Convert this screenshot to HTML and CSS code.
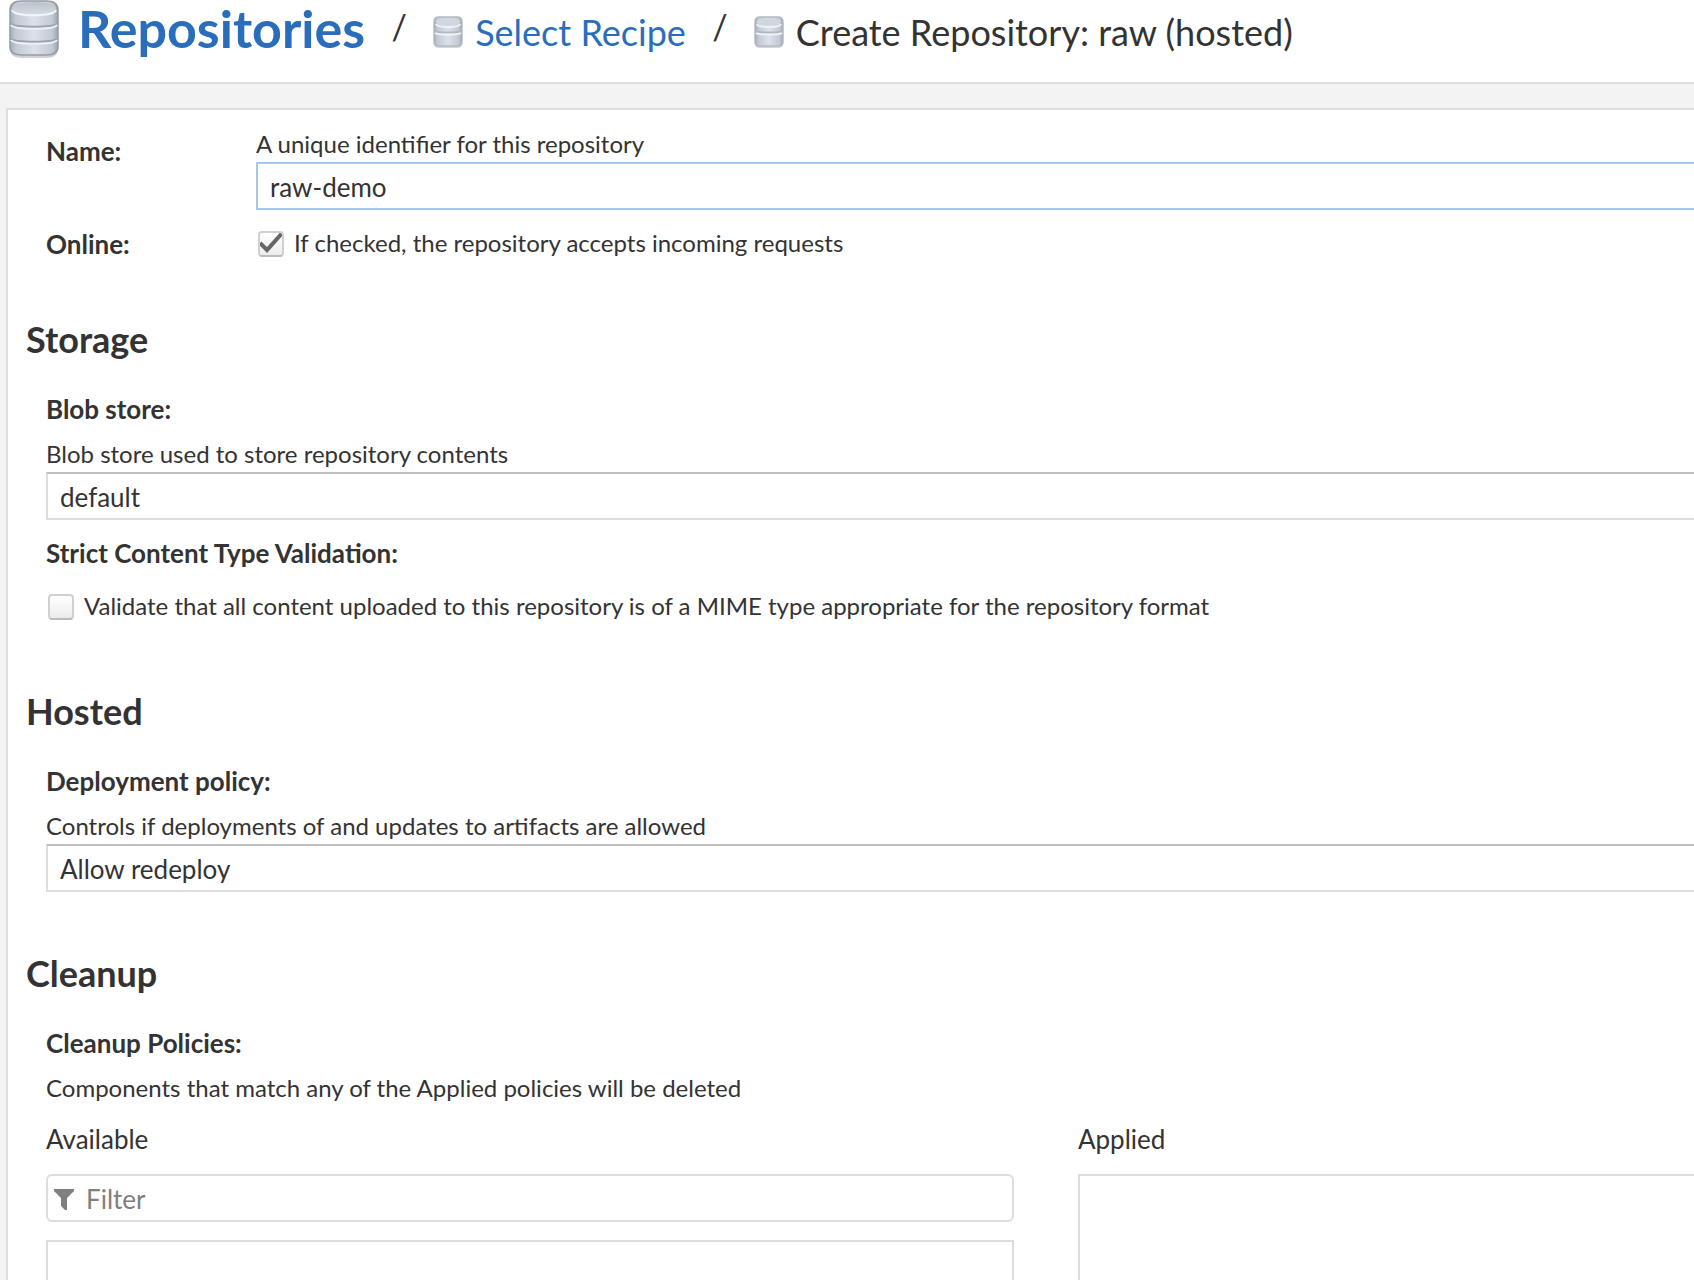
FILE: index.html
```html
<!DOCTYPE html>
<html lang="en">
<head>
<meta charset="utf-8">
<title>Create Repository: raw (hosted)</title>
<link rel="stylesheet" href="styles.css">
</head>
<body>
<svg class="defs" width="0" height="0" aria-hidden="true">
  <defs>
    <linearGradient id="metal" x1="0" x2="1" y1="0" y2="0">
      <stop offset="0" stop-color="#a3abb3"/>
      <stop offset=".12" stop-color="#c3cad3"/>
      <stop offset=".5" stop-color="#dce1ec"/>
      <stop offset=".88" stop-color="#c3cad3"/>
      <stop offset="1" stop-color="#9aa2aa"/>
    </linearGradient>
    <linearGradient id="lid" x1="0" x2="0" y1="0" y2="1">
      <stop offset="0" stop-color="#b9c2c9"/>
      <stop offset="1" stop-color="#d3dae2"/>
    </linearGradient>
    <symbol id="db-large" viewBox="0 0 52 60">
      <path d="M2 9v38q0 9 12 9h24q12 0 12-9V9z" fill="#000" opacity=".18" transform="translate(0 2)"/>
      <path d="M2 10v37q0 8 12 8h24q12 0 12-8V10q0-9-12-9H14Q2 1 2 10z" fill="url(#metal)" stroke="#949ea6" stroke-width="1.5"/>
      <ellipse cx="26" cy="8" rx="22" ry="6" fill="url(#lid)"/>
      <path d="M4 10c2 7 42 7 44 0" fill="none" stroke="#f2f5f8" stroke-width="2"/>
      <path d="M2 23c3 5 45 5 48 0M2 38c3 5 45 5 48 0" fill="none" stroke="#98a2aa" stroke-width="2"/>
      <path d="M3 25c3 5 43 5 46 0M3 40c3 5 43 5 46 0" fill="none" stroke="#edf0f5" stroke-width="2"/>
    </symbol>
    <symbol id="db-small" viewBox="0 0 30 32">
      <path d="M1 5v22q0 4 5 4h18q5 0 5-4V5z" fill="#000" opacity=".16" transform="translate(0 1)"/>
      <path d="M1 6v20q0 4 5 4h18q5 0 5-4V6q0-5-5-5H6Q1 1 1 6z" fill="url(#metal)" stroke="#b2babf" stroke-width="1.5"/>
      <ellipse cx="15" cy="6" rx="12" ry="4" fill="#cfd8df"/>
      <path d="M3 8c1 4 23 4 24 0" fill="none" stroke="#eef2f5" stroke-width="2"/>
      <path d="M2 15c2 2 24 2 26 0" fill="none" stroke="#b0b9c1" stroke-width="2"/>
      <path d="M2 17c2 2 24 2 26 0" fill="none" stroke="#eef1f6" stroke-width="2"/>
    </symbol>
  </defs>
</svg>
<div class="app">
  <header class="header">
    <nav class="breadcrumb" aria-label="Breadcrumb">
      <svg class="icon-large" aria-hidden="true"><use href="#db-large"/></svg>
      <a class="crumb-root" href="#repositories">Repositories</a>
      <span class="slash">/</span>
      <svg class="icon-small" aria-hidden="true"><use href="#db-small"/></svg>
      <a class="crumb" href="#recipe">Select Recipe</a>
      <span class="slash">/</span>
      <svg class="icon-small" aria-hidden="true"><use href="#db-small"/></svg>
      <span class="crumb">Create Repository: raw (hosted)</span>
    </nav>
  </header>
  <main class="main">
    <form class="panel">
      <div class="row">
        <label class="label label-inline" for="name">Name:</label>
        <div>
          <p class="help" id="name-help">A unique identifier for this repository</p>
          <input class="field field-active" id="name" type="text" value="raw-demo" aria-describedby="name-help">
        </div>
      </div>
      <div class="row row-online">
        <span class="label">Online:</span>
        <div class="check">
          <input class="box" id="online" type="checkbox" checked>
          <label for="online">If checked, the repository accepts incoming requests</label>
        </div>
      </div>

      <section class="section">
        <h2 class="title">Storage</h2>
        <div class="group">
          <label class="label" for="blob">Blob store:</label>
          <p class="help">Blob store used to store repository contents</p>
          <select class="field" id="blob"><option>default</option></select>
        </div>
        <div class="group group-check">
          <span class="label">Strict Content Type Validation:</span>
          <div class="check">
            <input class="box" id="strict" type="checkbox">
            <label for="strict">Validate that all content uploaded to this repository is of a MIME type appropriate for the repository format</label>
          </div>
        </div>
      </section>

      <section class="section section-hosted">
        <h2 class="title">Hosted</h2>
        <div class="group">
          <label class="label" for="policy">Deployment policy:</label>
          <p class="help">Controls if deployments of and updates to artifacts are allowed</p>
          <select class="field" id="policy"><option>Allow redeploy</option></select>
        </div>
      </section>

      <section class="section section-fill">
        <h2 class="title">Cleanup</h2>
        <div class="group group-fill">
          <span class="label">Cleanup Policies:</span>
          <p class="help">Components that match any of the Applied policies will be deleted</p>
          <div class="lists">
            <div class="column">
              <label class="list-name" for="filter">Available</label>
              <div class="filter">
                <svg class="funnel" viewBox="0 0 20 21" aria-hidden="true"><path d="M0 0h20v2l-7 7v12h-2l-4-4V9L0 2z" fill="#808080"/></svg>
                <input class="filter-input" id="filter" type="text" placeholder="Filter">
              </div>
              <div class="list"></div>
            </div>
            <div class="column">
              <span class="list-name">Applied</span>
              <div class="list list-applied"></div>
            </div>
          </div>
        </div>
      </section>
    </form>
  </main>
</div>
</body>
</html>
```
FILE: styles.css
```css
* { box-sizing: border-box; }

body {
  margin: 0;
  background: #f3f3f3;
  color: #333;
  font: 24px/28px Lato, "Open Sans", sans-serif;
}

p, h2 { margin: 0; }

.defs { position: absolute; }

.app {
  display: flex;
  flex-direction: column;
  min-height: 100vh;
}

.header {
  background: #fff;
  border-bottom: 2px solid #ddd;
  padding: 0 8px 22px;
}

.breadcrumb {
  display: flex;
  align-items: center;
  height: 60px;
  white-space: nowrap;
}

.breadcrumb a { color: #2a6ebb; text-decoration: none; }

.icon-large { width: 52px; height: 60px; flex: none; }
.icon-small { width: 30px; height: 32px; flex: none; margin: 4px 12px 0 0; }

.crumb-root {
  margin-left: 18px;
  padding-bottom: 4px;
  font-size: 52px;
  font-weight: 700;
  line-height: 56px;
}

.crumb { font-size: 36px; line-height: 40px; padding-top: 4px; }

.slash {
  width: 68px;
  padding-bottom: 6px;
  font-size: 34px;
  text-align: center;
}

.main {
  display: flex;
  flex: 1;
  padding: 24px 0 0 6px;
}

.panel {
  display: flex;
  flex: 1;
  flex-direction: column;
  min-width: 0;
  padding-top: 22px;
  background: #fff;
  border: solid #ddd;
  border-width: 2px 0 0 2px;
}

.row {
  display: grid;
  grid-template-columns: 210px 1fr;
  padding-left: 38px;
}

.row-online { margin-top: 20px; }

.label {
  display: block;
  font-size: 26px;
  font-weight: 700;
}

.label-inline { padding-top: 5px; }

.help { line-height: 24px; margin-bottom: 6px; }

.field {
  display: block;
  width: 100%;
  height: 48px;
  padding: 2px 12px 0;
  appearance: none;
  background: #fff;
  border: solid #ddd;
  border-width: 2px 0 2px 2px;
  border-top-color: #c0c0c0;
  border-radius: 0;
  color: inherit;
  font: inherit;
  font-size: 26px;
  outline: 0;
}

.field-active { border-color: #a2c9eb; }

.check {
  display: flex;
  align-items: center;
  gap: 10px;
  height: 28px;
  padding-left: 2px;
}

.check label { padding-bottom: 2px; }

.box {
  flex: none;
  width: 26px;
  height: 26px;
  margin: 0;
  appearance: none;
  background: linear-gradient(#fff, #ececec);
  border: 2px solid #d0d0d0;
  border-bottom-color: #bbb;
  border-radius: 4px;
}

.box:checked {
  background: url("data:image/svg+xml,%3Csvg xmlns='http://www.w3.org/2000/svg' viewBox='0 0 26 26'%3E%3Cpath d='M2 12l7 7L26 0' fill='none' stroke='%23666' stroke-width='4'/%3E%3C/svg%3E") border-box, linear-gradient(#fff, #ececec);
}

.section { margin-top: 61px; }
.section-hosted { margin-top: 70px; }

.title {
  padding-left: 18px;
  font-size: 36px;
  font-weight: 700;
  line-height: 40px;
}

.group { padding: 36px 0 0 38px; }
.group .help { margin-top: 19px; }
.group-check { padding-top: 19px; }
.group-check .check { margin-top: 26px; }

.section-fill, .group-fill, .column {
  display: flex;
  flex-direction: column;
}

.section-fill, .group-fill, .lists, .list { flex: 1; }

.lists {
  display: grid;
  grid-template-columns: 121fr 77fr;
  gap: 64px;
  padding-top: 19px;
}

.list-name { font-size: 26px; margin-bottom: 21px; }

.filter {
  display: flex;
  align-items: center;
  gap: 12px;
  height: 48px;
  margin-bottom: 18px;
  padding: 2px 6px 0;
  border: 2px solid #ddd;
  border-radius: 6px;
}

.funnel { width: 20px; height: 21px; }

.filter-input {
  flex: 1;
  min-width: 0;
  padding: 0;
  background: none;
  border: 0;
  color: inherit;
  font: inherit;
  font-size: 26px;
  outline: 0;
}

.filter-input::placeholder { color: #808080; }

.list {
  min-height: 40px;
  border: 2px solid #ddd;
  border-bottom: 0;
}

.list-applied { border-right: 0; }
```
